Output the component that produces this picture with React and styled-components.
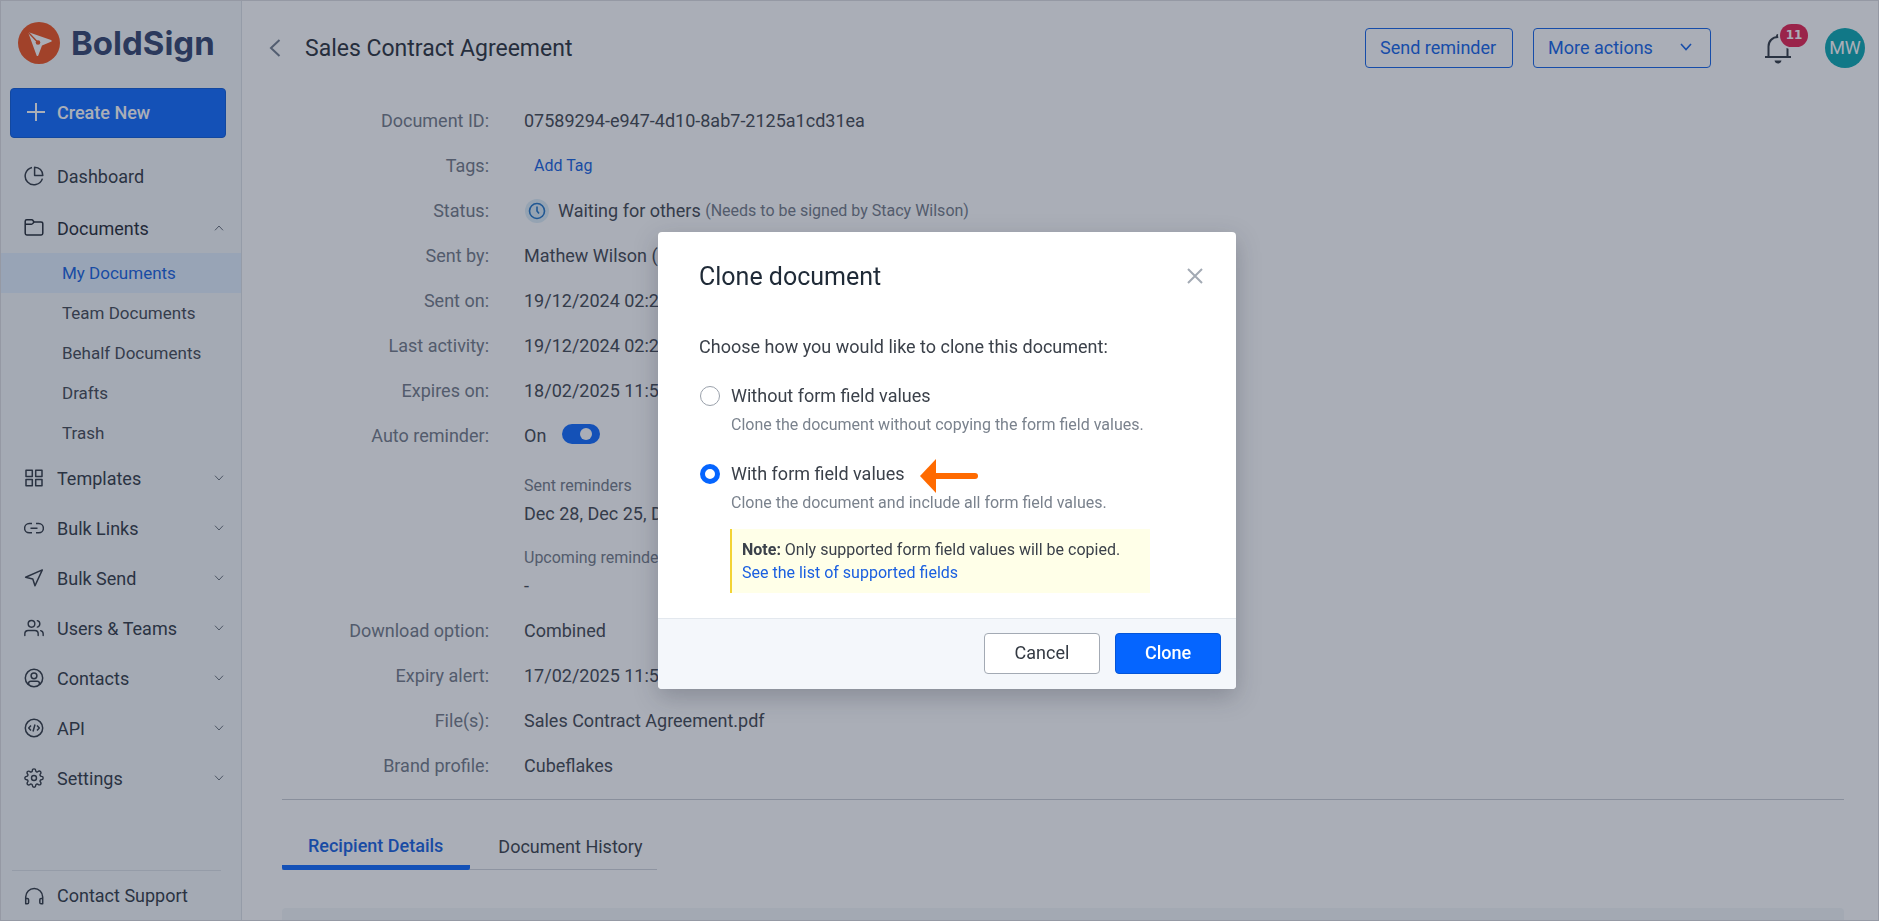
import React, { useState } from 'react'
import styled, { createGlobalStyle } from 'styled-components'
import { FiSettings, FiUsers } from 'react-icons/fi'

const GlobalStyle = createGlobalStyle`
  * {
    box-sizing: border-box;
  }
  body {
    margin: 0;
    font-family: Roboto, "Liberation Sans", sans-serif;
    font-size: 18px;
    color: #3b414a;
    background: #fff;
  }
  button, input {
    font-family: inherit;
  }
`

/* ---------- icons ---------- */

const icons = {
  dashboard: (
    <>
      <path d="M8 1.4a8.8 8.8 0 1 0 10.4 11.2" />
      <path d="M10.6 1.2v8.2h8.2c0-4.6-3.5-8.2-8.2-8.2z" />
    </>
  ),
  folder: (
    <>
      <path d="M1.2 5V3.2c0-.9.6-1.5 1.5-1.5h5c.6 0 1 .3 1.3.8l1 1.5h7c1 0 1.8.7 1.8 1.7v9.6c0 .9-.7 1.6-1.6 1.6H2.800c-.9 0-1.600-.7-1.600-1.600z" />
      <path d="M1.2 6.2h6.3c.6 0 1-.3 1.4-.8L10 4" />
    </>
  ),
  templates: (
    <>
      <rect x="2" y="2.2" width="6.3" height="6.3" />
      <rect x="11.7" y="2.2" width="6.3" height="6.3" />
      <rect x="2" y="11.5" width="6.3" height="6.3" />
      <rect x="11.7" y="11.5" width="6.3" height="6.3" />
    </>
  ),
  link: (
    <path d="M8 5.6H5.2a4.6 4.6 0 0 0 0 9.2H8M12 5.6h2.8a4.6 4.6 0 0 1 0 9.2H12M6.5 10.2h7" />
  ),
  send: <path d="M18.3 1.9 1.6 9.3l7.2 1.800 2.200 6.600z" />,
  contact: (
    <>
      <circle cx="10" cy="10" r="8.7" />
      <circle cx="10" cy="7.8" r="2.9" />
      <path d="M4.6 16.5v-1c0-1.2.9-2.2 2.2-2.2h6.4c1.3 0 2.2 1 2.2 2.2v1" />
    </>
  ),
  api: (
    <>
      <circle cx="10" cy="10" r="8.7" />
      <path d="M7 7.5 4.7 10 7 12.5M13 7.5l2.3 2.5-2.3 2.5M11 6.5l-2 7" />
    </>
  ),
  support: (
    <path d="M1.7 17.5V11a8.5 8.5 0 0 1 17 0v6.5M1.7 12.5h1.6c.8 0 1.3.5 1.3 1.3v2.6c0 .8-.5 1.3-1.3 1.3H1.7zM18.7 12.5h-1.6c-.8 0-1.3.5-1.3 1.3v2.6c0 .8.5 1.3 1.3 1.3h1.6z" />
  ),
}

function Icon({ name }) {
  if (name === 'users') return <FiUsers size={20} strokeWidth={1.7} />
  if (name === 'settings') return <FiSettings size={20} strokeWidth={1.7} />
  return (
    <svg width="20" height="20" viewBox="0 0 20 20" fill="none" stroke="currentColor" strokeWidth="1.5" strokeLinejoin="round" aria-hidden="true">
      {icons[name]}
    </svg>
  )
}

function Caret({ up }) {
  return (
    <svg width="10" height="6" viewBox="0 0 10 6" fill="none" stroke="#646b76" strokeWidth="1" aria-hidden="true">
      <path d={up ? 'M1 5.3 5 1l4 4.3' : 'M1 .7 5 5 9 .7'} />
    </svg>
  )
}

/* ---------- data ---------- */

const subMenu = ['My Documents', 'Team Documents', 'Behalf Documents', 'Drafts', 'Trash']

const menu = [
  { icon: 'templates', label: 'Templates' },
  { icon: 'link', label: 'Bulk Links' },
  { icon: 'send', label: 'Bulk Send' },
  { icon: 'users', label: 'Users & Teams' },
  { icon: 'contact', label: 'Contacts' },
  { icon: 'api', label: 'API' },
  { icon: 'settings', label: 'Settings' },
]

/* ---------- parts ---------- */

function SideBar() {
  return (
    <Side>
      <Brand>
        <svg width="42" height="42" viewBox="0 0 42 42" aria-hidden="true">
          <circle cx="21" cy="21" r="21" fill="#f04c14" />
          <path fill="#fff" d="M10 10 33 17.900c1 .4 1 1.500 0 1.900l-9 3.600-3.700 10c-.4 1-1.500.9-1.800-.2z" />
          <path fill="none" stroke="#f04c14" strokeWidth="1.4" d="m10 10 9.700 10.200" />
          <circle cx="20" cy="20.5" r="2.3" fill="#f04c14" />
        </svg>
        <span>BoldSign</span>
      </Brand>
      <CreateButton type="button">
        <svg width="18" height="18" viewBox="0 0 18 18" fill="none" stroke="#fff" strokeWidth="2" aria-hidden="true">
          <path d="M9 0v18M0 9h18" />
        </svg>
        Create New
      </CreateButton>
      <Nav>
        <NavLink href="#dashboard" $spaced>
          <Icon name="dashboard" />
          <span>Dashboard</span>
        </NavLink>
        <NavLink href="#documents" $open>
          <Icon name="folder" />
          <span>Documents</span>
          <Caret up />
        </NavLink>
        {subMenu.map((item, i) => (
          <SubLink key={item} href="#documents" $active={i === 0}>{item}</SubLink>
        ))}
        {menu.map((item) => (
          <NavLink key={item.label} href="#menu">
            <Icon name={item.icon} />
            <span>{item.label}</span>
            <Caret />
          </NavLink>
        ))}
      </Nav>
      <Support>
        <NavLink href="#support">
          <Icon name="support" />
          <span>Contact Support</span>
        </NavLink>
      </Support>
    </Side>
  )
}

function TopBar() {
  return (
    <Top>
      <BackButton type="button" aria-label="Back">
        <svg width="12" height="18" viewBox="0 0 12 18" fill="none" stroke="currentColor" strokeWidth="2" aria-hidden="true">
          <path d="M10.5 1 2 9l8.5 8" />
        </svg>
      </BackButton>
      <Title>Sales Contract Agreement</Title>
      <OutlineButton type="button">Send reminder</OutlineButton>
      <OutlineButton type="button" $menu>
        More actions
        <svg width="12" height="8" viewBox="0 0 12 8" fill="none" stroke="currentColor" strokeWidth="1.6" aria-hidden="true">
          <path d="m1 1 5 5.5L11 1" />
        </svg>
      </OutlineButton>
      <BellButton type="button" aria-label="Notifications">
        <svg width="28" height="32" viewBox="0 0 28 32" fill="none" aria-hidden="true">
          <path d="M1 25h26M4.5 25V14.5C4.5 9 8.5 5 14 5s9.5 4 9.5 9.5V25" stroke="#2b323c" strokeWidth="2" />
          <path d="M12 5.5V4a2 2 0 0 1 4 0v1.5z" fill="#2b323c" />
          <path d="M10.5 28.5h7c-.4 1.8-1.7 3-3.5 3s-3.1-1.2-3.5-3z" fill="#2b323c" />
        </svg>
        <Badge>11</Badge>
      </BellButton>
      <Avatar>MW</Avatar>
    </Top>
  )
}

function Details() {
  const [reminder, setReminder] = useState(true)
  return (
    <DetailList>
      <dt>Document ID:</dt>
      <dd>07589294-e947-4d10-8ab7-2125a1cd31ea</dd>
      <dt>Tags:</dt>
      <dd><TagButton type="button">Add Tag</TagButton></dd>
      <dt>Status:</dt>
      <dd>
        <StatusIcon width="26" height="26" viewBox="0 0 26 26" fill="none" aria-hidden="true">
          <circle cx="13" cy="13" r="12" fill="#dcedf7" />
          <circle cx="13" cy="13" r="7.5" stroke="#1a6fc4" strokeWidth="1.6" />
          <path d="M13 8.5V13l2 2.5" stroke="#1a6fc4" strokeWidth="1.6" />
        </StatusIcon>
        Waiting for others <Muted>(Needs to be signed by Stacy Wilson)</Muted>
      </dd>
      <dt>Sent by:</dt>
      <dd>Mathew Wilson (</dd>
      <dt>Sent on:</dt>
      <dd>19/12/2024 02:2</dd>
      <dt>Last activity:</dt>
      <dd>19/12/2024 02:2</dd>
      <dt>Expires on:</dt>
      <dd>18/02/2025 11:5</dd>
      <dt><label htmlFor="auto-reminder">Auto reminder:</label></dt>
      <dd>
        On
        <Toggle id="auto-reminder" type="checkbox" checked={reminder} onChange={() => setReminder(!reminder)} />
      </dd>
      <Reminders>
        <Muted>Sent reminders</Muted>
        <p>Dec 28, Dec 25, D</p>
        <Muted>Upcoming reminde</Muted>
        <p>-</p>
      </Reminders>
      <dt>Download option:</dt>
      <dd>Combined</dd>
      <dt>Expiry alert:</dt>
      <dd>17/02/2025 11:5</dd>
      <dt>File(s):</dt>
      <dd>Sales Contract Agreement.pdf</dd>
      <dt>Brand profile:</dt>
      <dd>Cubeflakes</dd>
    </DetailList>
  )
}

function CloneDialog() {
  const [mode, setMode] = useState('with')
  return (
    <Backdrop>
      <Dialog role="dialog" aria-modal="true" aria-labelledby="clone-title">
        <DialogHead>
          <h2 id="clone-title">Clone document</h2>
          <CloseButton type="button" aria-label="Close">
            <svg width="16" height="16" viewBox="0 0 16 16" fill="none" stroke="currentColor" strokeWidth="2" aria-hidden="true">
              <path d="m1 1 14 14M15 1 1 15" />
            </svg>
          </CloseButton>
        </DialogHead>
        <DialogBody>
          <p>Choose how you would like to clone this document:</p>
          <Option>
            <Radio id="without" name="mode" type="radio" checked={mode === 'without'} onChange={() => setMode('without')} />
            <label htmlFor="without">Without form field values</label>
            <small>Clone the document without copying the form field values.</small>
          </Option>
          <Option>
            <Radio id="with" name="mode" type="radio" checked={mode === 'with'} onChange={() => setMode('with')} />
            <OptionLine>
              <label htmlFor="with">With form field values</label>
              <svg width="58" height="38" viewBox="0 0 58 38" aria-hidden="true">
                <path d="M0 21 16 4v34z" fill="#ff6a00" />
                <path d="M14 21h41" stroke="#ff6a00" strokeWidth="6" strokeLinecap="round" />
              </svg>
            </OptionLine>
            <small>Clone the document and include all form field values.</small>
          </Option>
          <Note>
            <b>Note:</b> Only supported form field values will be copied.
            <br />
            <a href="#fields">See the list of supported fields</a>
          </Note>
        </DialogBody>
        <DialogFoot>
          <CancelButton type="button">Cancel</CancelButton>
          <CloneButton type="button">Clone</CloneButton>
        </DialogFoot>
      </Dialog>
    </Backdrop>
  )
}

function App() {
  return (
    <Page>
      <GlobalStyle />
      <SideBar />
      <Main>
        <TopBar />
        <Content>
          <Details />
          <Tabs role="tablist">
            <Tab type="button" role="tab" aria-selected="true" $active>Recipient Details</Tab>
            <Tab type="button" role="tab" aria-selected="false">Document History</Tab>
          </Tabs>
          <Panel />
        </Content>
      </Main>
      <CloneDialog />
    </Page>
  )
}

export default App

const Page = styled.div`
  display: flex;
  height: 100vh;
  overflow: hidden;
  border: 1px solid #dcdcdf;
`

const Side = styled.aside`
  display: flex;
  flex-direction: column;
  flex: none;
  width: 241px;
  background: #f5f9fb;
  border-right: 1px solid #dde1e6;
`

const Brand = styled.div`
  display: flex;
  align-items: center;
  gap: 11px;
  padding: 21px 0 24px 17px;
  font-family: Inter, Roboto, sans-serif;
  font-size: 33px;
  line-height: 42px;
  font-weight: 700;
  color: #2c3c68;
`

const CreateButton = styled.button`
  display: flex;
  align-items: center;
  gap: 12px;
  height: 50px;
  margin: 0 15px 0 9px;
  padding: 0 16px 2px;
  border: 1px solid #0455d8;
  border-radius: 4px;
  background: #0565ff;
  color: #fff;
  font-size: 18px;
  font-weight: 500;
  cursor: pointer;
`

const Nav = styled.nav`
  flex: 1;
  padding-top: 13px;
`

const NavLink = styled.a`
  display: flex;
  align-items: center;
  gap: 13px;
  height: 50px;
  padding: 0 17px 0 23px;
  margin-bottom: ${(p) => (p.$spaced ? '2px' : '0')};
  color: ${(p) => (p.$open ? '#1b222c' : '#2b323c')};
  font-size: 18px;
  text-decoration: none;
  span {
    flex: 1;
  }
`

const SubLink = styled.a`
  display: flex;
  align-items: center;
  height: 40px;
  padding-left: 61px;
  font-size: 17px;
  color: ${(p) => (p.$active ? '#0d5be0' : '#3d434d')};
  background: ${(p) => (p.$active ? '#e2effd' : 'transparent')};
  text-decoration: none;
`

const Support = styled.div`
  margin: 0 20px 0 11px;
  border-top: 1px solid #dde1e6;
  a {
    height: 49px;
    padding: 0 0 0 12px;
  }
`

const Main = styled.main`
  flex: 1;
  min-width: 0;
`

const Top = styled.header`
  display: flex;
  align-items: center;
  height: 94px;
  padding: 0 13px 0 27px;
`

const BackButton = styled.button`
  display: flex;
  padding: 0;
  margin-right: 24px;
  border: 0;
  background: none;
  color: #6f7a8a;
  cursor: pointer;
`

const Title = styled.h1`
  flex: 1;
  margin: 0;
  font-size: 23px;
  font-weight: 400;
  color: #232a34;
`

const OutlineButton = styled.button`
  display: flex;
  align-items: center;
  justify-content: space-between;
  width: ${(p) => (p.$menu ? '178px' : '148px')};
  height: 40px;
  margin-right: 20px;
  padding: ${(p) => (p.$menu ? '0 18px 2px 14px' : '0 14px 2px')};
  border: 1px solid #0b5ee8;
  border-radius: 4px;
  background: none;
  color: #0b5ee8;
  font-size: 18px;
  cursor: pointer;
`

const BellButton = styled.button`
  position: relative;
  display: flex;
  margin: 0 33px;
  padding: 0;
  border: 0;
  background: none;
  cursor: pointer;
`

const Badge = styled.span`
  position: absolute;
  top: -8px;
  left: 16px;
  width: 28px;
  border-radius: 12px;
  background: #e5194a;
  box-shadow: 0 0 0 2px #fff;
  color: #fff;
  font-family: "DejaVu Sans", sans-serif;
  font-size: 12px;
  font-weight: 700;
  line-height: 23px;
  text-align: center;
`

const Avatar = styled.div`
  width: 40px;
  border-radius: 50%;
  background: #00a5af;
  color: #fff;
  font-size: 18px;
  line-height: 40px;
  text-align: center;
`

const Content = styled.div`
  padding: 0 34px 0 40px;
`

const DetailList = styled.dl`
  display: grid;
  grid-template-columns: 207px 1fr;
  column-gap: 35px;
  margin: 0;
  padding: 3px 0 11px;
  border-bottom: 1px solid #c8ccd2;
  line-height: 45px;
  dt {
    text-align: right;
    color: #6e7683;
  }
  dd {
    display: flex;
    align-items: center;
    height: 45px;
    margin: 0;
    white-space: pre;
  }
`

const Muted = styled.span`
  font-size: 16px;
  color: #6e7683;
`

const TagButton = styled.button`
  padding: 0 10px;
  border: 0;
  background: none;
  color: #0d5be0;
  font-size: 16px;
  cursor: pointer;
`

const StatusIcon = styled.svg`
  margin-right: 8px;
`

const Toggle = styled.input`
  appearance: none;
  display: flex;
  align-items: center;
  width: 38px;
  height: 20px;
  margin: 0 0 4px 16px;
  padding: 0 8px;
  border-radius: 10px;
  background: ${(p) => (p.checked ? '#0565ff' : '#b5bcc6')};
  justify-content: ${(p) => (p.checked ? 'flex-end' : 'flex-start')};
  &::after {
    content: '';
    width: 12px;
    height: 12px;
    border-radius: 50%;
    background: #fff;
  }
`

const Reminders = styled.dd`
  && {
    display: block;
    grid-column: 2;
    height: auto;
    padding: 13px 0 8px;
    line-height: 28px;
  }
  p {
    margin: 0 0 15px;
  }
  p:last-child {
    margin: 0;
  }
`

const Tabs = styled.div`
  display: inline-flex;
  margin: 22px 0 38px;
  border-bottom: 1px solid #d0d4da;
`

const Tab = styled.button`
  height: 48px;
  margin-bottom: -1px;
  padding: ${(p) => (p.$active ? '0 27px 2px 26px' : '0 14px 0 28px')};
  border: 0;
  background: ${(p) => (p.$active ? 'linear-gradient(#0565ff, #0565ff) bottom / 100% 5px no-repeat' : 'none')};
  border-radius: 2px;
  color: ${(p) => (p.$active ? '#0d5be0' : '#343a43')};
  font-size: 18px;
  font-weight: ${(p) => (p.$active ? 500 : 400)};
  cursor: pointer;
`

const Panel = styled.div`
  height: 60px;
  border-radius: 4px;
  background: #f3f7f9;
`

const Backdrop = styled.div`
  position: fixed;
  inset: 0;
  display: flex;
  align-items: center;
  justify-content: center;
  padding-left: 15px;
  background: rgba(43, 52, 75, 0.4);
`

const Dialog = styled.section`
  width: 578px;
  border-radius: 4px;
  background: #fff;
  box-shadow: 0 8px 24px rgba(30, 36, 50, 0.25);
`

const DialogHead = styled.div`
  display: flex;
  align-items: center;
  justify-content: space-between;
  padding: 29px 33px 0 41px;
  h2 {
    margin: 0;
    font-size: 25px;
    font-weight: 400;
    line-height: 32px;
    color: #1f2a37;
  }
`

const CloseButton = styled.button`
  display: flex;
  padding: 0 0 2px;
  border: 0;
  background: none;
  color: #a3aab4;
  cursor: pointer;
`

const DialogBody = styled.div`
  padding: 41px 41px 25px;
  p {
    margin: 0 0 20px;
    line-height: 26px;
  }
`

const Option = styled.div`
  display: grid;
  grid-template-columns: 20px 1fr;
  column-gap: 11px;
  align-items: center;
  margin-bottom: 20px;
  padding-left: 1px;
  label {
    line-height: 32px;
  }
  small {
    grid-column: 2;
    font-size: 16px;
    line-height: 26px;
    color: #7a828d;
  }
`

const OptionLine = styled.div`
  display: flex;
  align-items: center;
  gap: 15px;
  height: 32px;
`

const Radio = styled.input`
  appearance: none;
  width: 20px;
  height: 20px;
  margin: 0;
  border: ${(p) => (p.checked ? '5px solid #0565ff' : '1px solid #9aa1ab')};
  border-radius: 50%;
  background: #fff;
`

const Note = styled.div`
  margin: -7px 45px 0 31px;
  padding: 9px 10px;
  border-left: 2px solid #f3d333;
  background: #ffffe8;
  font-size: 16px;
  line-height: 23px;
  a {
    color: #1a5fe0;
    text-decoration: none;
  }
`

const DialogFoot = styled.div`
  display: flex;
  justify-content: flex-end;
  gap: 15px;
  padding: 14px 15px 15px;
  border-top: 1px solid #e3e8ee;
  border-radius: 0 0 4px 4px;
  background: #f4f7fb;
`

const CancelButton = styled.button`
  width: 116px;
  height: 41px;
  padding-bottom: 4px;
  border: 1px solid #a3aab4;
  border-radius: 4px;
  background: #fff;
  color: #343a43;
  font-size: 18px;
  cursor: pointer;
`

const CloneButton = styled(CancelButton)`
  width: 106px;
  border-color: #0455d8;
  background: #0565ff;
  color: #fff;
  font-weight: 500;
`
